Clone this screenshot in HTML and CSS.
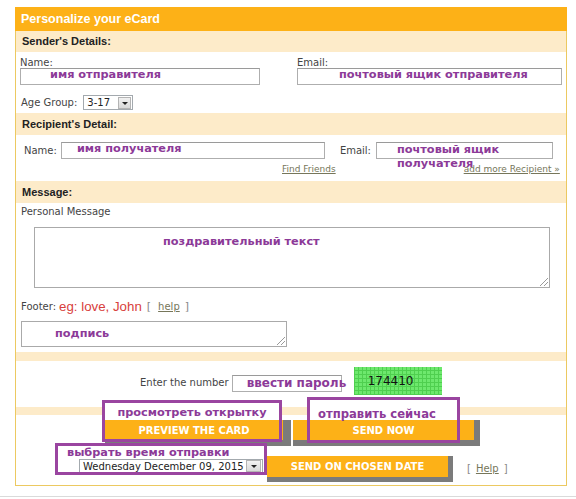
FILE: index.html
```html
<!DOCTYPE html>
<html>
<head>
<meta charset="utf-8">
<title>Personalize your eCard</title>
<link rel="stylesheet" href="styles.css">
</head>
<body>
<div class="panel">
  <div class="head">Personalize your eCard</div>
  <div class="band band-sender">Sender's Details:</div>
  <div class="sender">
    <div class="sender-grid">
      <div class="col">
        <div class="lbl">Name:</div>
        <div class="field f-sname"><span class="ann">имя отправителя</span></div>
      </div>
      <div class="col">
        <div class="lbl">Email:</div>
        <div class="field f-semail"><span class="ann">почтовый ящик отправителя</span></div>
      </div>
    </div>
    <div class="age">
      <span class="lbl">Age Group:</span>
      <div class="select s-age"><span class="sel-text">3-17</span><span class="sel-btn"></span></div>
    </div>
  </div>
  <div class="band band-rcp">Recipient's Detail:</div>
  <div class="rcp">
    <div class="rcp-row">
      <span class="lbl">Name:</span>
      <div class="field f-rname"><span class="ann">имя получателя</span></div>
      <span class="lbl l-remail">Email:</span>
      <div class="field f-remail"><span class="ann">почтовый ящик<br>получателя</span></div>
    </div>
    <div class="links"><a class="lnk l-find">Find Friends</a><a class="lnk l-more">add more Recipient »</a></div>
  </div>
  <div class="band band-msg">Message:</div>
  <div class="msg">
    <div class="lbl">Personal Message</div>
    <div class="area a-msg"><span class="ann">поздравительный текст</span></div>
    <div class="footer-line"><span class="lbl">Footer:</span><span class="eg">eg: love, John</span><span class="br br-open">[</span><a class="lnk l-help">help</a><span class="br">]</span></div>
    <div class="area a-foot"><span class="ann">подпись</span></div>
  </div>
  <div class="band band-thin"></div>
  <div class="captcha-row">
    <span class="lbl l-enter">Enter the number</span>
    <div class="field f-code"><span class="ann">ввести пароль</span></div>
    <div class="captcha">174410</div>
  </div>
  <div class="band band-thin2"></div>
  <div class="actions">
    <div class="act-row1">
      <div class="btn b-preview">PREVIEW THE CARD</div>
      <div class="btn b-send">SEND NOW</div>
    </div>
    <div class="act-row2">
      <div class="select s-date"><span class="sel-text">Wednesday December 09, 2015</span><span class="sel-btn"></span></div>
      <div class="btn b-date">SEND ON CHOSEN DATE</div>
      <span class="help"><span class="br">[</span><a class="lnk">Help</a><span class="br">]</span></span>
    </div>
    <div class="note n1"><div class="note-lbl">просмотреть открытку</div></div>
    <div class="note n2"><div class="note-lbl">отправить сейчас</div></div>
    <div class="note n3"><div class="note-lbl">выбрать время отправки</div></div>
  </div>
</div>
<div class="bottom-line"></div>
</body>
</html>
```

FILE: styles.css
```css
body {
  margin: 0;
  background: #fff;
  font-family: "DejaVu Sans", Verdana, sans-serif;
  color: #444;
}

.panel {
  margin: 7px 0 0 15px;
  width: 552px;
  box-sizing: border-box;
  border: 1px solid #ecc961;
  border-top: none;
}

.head {
  margin: 0 -1px;
  height: 24px;
  line-height: 24px;
  padding-left: 6px;
  background: #fdb117;
  color: #fff;
  font-family: "Liberation Sans", Arial, sans-serif;
  font-weight: bold;
  font-size: 12.5px;
}

.band {
  background: #fdebc9;
  padding-left: 6px;
  font-family: "Liberation Sans", Arial, sans-serif;
  font-weight: bold;
  font-size: 11px;
  color: #222;
  height: 22px;
  line-height: 22px;
}
.band-sender { height: 21px; line-height: 21px; }
.band-thin { height: 9px; }
.band-thin2 { height: 8px; }

.lbl {
  font-size: 10px;
  line-height: 11px;
  color: #444;
}

.ann {
  font-family: "DejaVu Sans", Verdana, sans-serif;
  font-weight: bold;
  font-size: 11.3px;
  line-height: 12px;
  color: #8c3a98;
  white-space: nowrap;
}

.field {
  box-sizing: border-box;
  height: 17px;
  border: 1px solid #aeaeae;
  border-top-color: #9a9a9a;
  background: #fff;
  display: flex;
  align-items: flex-start;
}

/* Sender */
.sender {
  height: 61px;
  box-sizing: border-box;
  padding: 5px 0 0 4px;
}
.sender-grid {
  display: grid;
  grid-template-columns: 240px 265px;
  column-gap: 37px;
}
.f-sname { padding-left: 29px; }
.f-semail { padding-left: 41px; }
.age {
  display: flex;
  align-items: center;
  gap: 6px;
  margin-top: 10px;
  padding-left: 1px;
  height: 15px;
}

.select {
  box-sizing: border-box;
  border: 1px solid #a3a9ae;
  background: #fff;
  display: flex;
  align-items: center;
  justify-content: space-between;
  padding: 0 1px 0 3px;
}
.sel-text {
  font-size: 10px;
  color: #222;
  white-space: nowrap;
}
.sel-btn {
  box-sizing: border-box;
  width: 13px;
  height: 11px;
  border: 1px solid #b4b4b4;
  background: linear-gradient(#f2f2f2, #d9d9d9);
  display: flex;
  align-items: center;
  justify-content: center;
}
.sel-btn::after {
  content: "";
  border-left: 3px solid transparent;
  border-right: 3px solid transparent;
  border-top: 3px solid #222;
  margin-top: 1px;
}
.s-age { width: 50px; height: 15px; }
.s-age .sel-btn { width: 13px; height: 12px; }

/* Recipient */
.rcp {
  height: 46px;
  box-sizing: border-box;
  padding-top: 7px;
}
.rcp-row {
  display: flex;
  align-items: center;
  padding-left: 8px;
  height: 17px;
}
.f-rname { width: 264px; margin-left: 4px; padding-left: 15px; }
.l-remail { margin-left: 15px; }
.f-remail { width: 177px; margin-left: 5px; padding-left: 20px; }
.f-remail .ann { line-height: 14px; }

.links {
  display: flex;
  margin-top: 5px;
  padding-left: 266px;
  height: 10px;
  line-height: 10px;
}
.lnk {
  font-size: 9px;
  color: #76765a;
  text-decoration: underline;
}
.l-more { margin-left: 128px; position: relative; }

/* Message */
.msg {
  height: 149px;
  box-sizing: border-box;
  padding-top: 3px;
  padding-left: 5px;
}
.msg > .lbl { line-height: 12px; }
.area {
  box-sizing: border-box;
  border: 1px solid #aaa;
  background: #fff;
  position: relative;
  display: flex;
  align-items: flex-start;
}
.area::after {
  content: "";
  position: absolute;
  right: 1px;
  bottom: 1px;
  width: 8px;
  height: 8px;
  background: linear-gradient(135deg, transparent 45%, #9a9a9a 45%, #9a9a9a 55%, transparent 55%, transparent 70%, #9a9a9a 70%, #9a9a9a 80%, transparent 80%);
}
.a-msg {
  margin: 9px 0 0 13px;
  width: 516px;
  height: 61px;
  padding: 8px 0 0 128px;
}
.footer-line {
  margin-top: 10px;
  height: 16px;
  display: flex;
  align-items: center;
}
.footer-line .lbl { color: #444; }
.eg {
  font-family: "Liberation Sans", Arial, sans-serif;
  font-size: 13.3px;
  color: #d8403c;
  margin-left: 3px;
}
.br {
  font-size: 11px;
  color: #888;
}
.br-open { margin-left: 5px; }
.l-help { margin: 0 5px 0 7px; font-size: 10px; }
.a-foot {
  margin-top: 7px;
  width: 266px;
  height: 26px;
  padding: 6px 0 0 33px;
}

/* Captcha */
.captcha-row {
  height: 46px;
  display: flex;
  align-items: flex-start;
  padding-left: 124px;
}
.l-enter { margin-top: 16px; line-height: 12px; }
.f-code {
  margin: 14px 0 0 3px;
  width: 110px;
  padding-left: 14px;
}
.f-code .ann { font-size: 12px; line-height: 14px; }
.captcha {
  margin: 6px 0 0 12px;
  width: 88px;
  height: 28px;
  box-sizing: border-box;
  padding-left: 14px;
  line-height: 28px;
  font-size: 12px;
  color: #111;
  background-color: #6de86d;
  background-image:
    repeating-linear-gradient(90deg, #4fcf4f 0 1px, transparent 1px 4px),
    repeating-linear-gradient(0deg, #4fcf4f 0 1px, transparent 1px 4px);
}

/* Actions */
.actions {
  position: relative;
  height: 70px;
  box-sizing: border-box;
  padding-top: 5px;
}
.act-row1 {
  display: flex;
  padding-left: 89px;
}
.btn {
  background: #fdb117;
  color: #fff;
  font-family: "DejaVu Sans", Verdana, sans-serif;
  font-weight: bold;
  font-size: 10px;
  text-align: center;
  border-right: 6px solid #7b7b7b;
  border-bottom: 6px solid #7b7b7b;
}
.b-preview {
  width: 178px;
  height: 20px;
  line-height: 21px;
  border-right-width: 8px;
}
.b-send {
  margin-left: 2px;
  width: 181px;
  height: 20px;
  line-height: 21px;
}
.act-row2 {
  display: flex;
  align-items: flex-start;
  margin-top: 10px;
  padding-left: 63px;
}
.s-date {
  margin-top: 3px;
  width: 184px;
  height: 14px;
}
.s-date .sel-btn { width: 15px; height: 12px; }
.b-date {
  margin-left: 4px;
  width: 181px;
  height: 21px;
  line-height: 21px;
  border-right-width: 5px;
  border-bottom-width: 5px;
}
.help {
  margin: 5px 0 0 14px;
  line-height: 12px;
}
.help .lnk { font-size: 10px; margin: 0 5px; }
.help .br { font-size: 10px; }

.note {
  position: absolute;
  box-sizing: border-box;
  border: 3px solid #9a45a0;
}
.note-lbl {
  background: #fff;
  color: #8c3a98;
  font-weight: bold;
  font-size: 11.3px;
  white-space: nowrap;
}
.n1 { left: 86px; top: -15px; width: 180px; height: 42px; }
.n1 .note-lbl { padding-top: 2px; height: 15px; line-height: 16px; text-align: center; }
.n2 { left: 291px; top: -18px; width: 153px; height: 46px; }
.n2 .note-lbl { padding: 6px 0 0 8px; height: 14px; line-height: 16px; font-size: 11.6px; }
.n3 { left: 39px; top: 28px; width: 212px; height: 32px; }
.n3 .note-lbl { padding-left: 9px; height: 13px; line-height: 14px; }

.bottom-line {
  margin-top: 10px;
  height: 1px;
  background: #dadada;
}
```
